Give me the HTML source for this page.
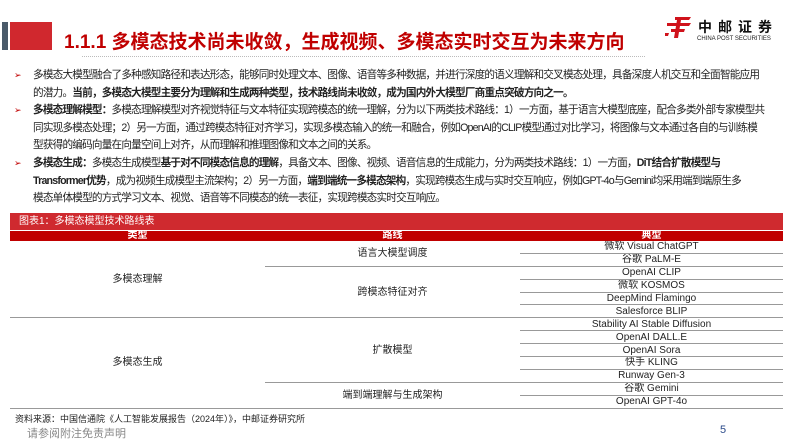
<!DOCTYPE html><html><head><meta charset="utf-8"><style>
body{margin:0;width:793px;height:446px;background:#fff;position:relative;overflow:hidden;font-family:"Liberation Sans","Noto Sans CJK SC",sans-serif;}
.a{position:absolute;white-space:nowrap}
.p{position:absolute;left:33px;font-size:10.6px;letter-spacing:-0.78px;line-height:17.6px;color:#222;white-space:nowrap}
.b{position:absolute;left:14px;font-size:9px;color:#c00000}
table{position:absolute;left:10px;top:231px;width:773px;border-collapse:collapse;font-size:10px;color:#222;table-layout:fixed}
td{text-align:center;height:11.9px;padding:0;line-height:11px;overflow:hidden}
.h td{background:#c00000;color:#fff;font-weight:bold;height:10px;line-height:10px}
.r{border-bottom:1px solid #999}
</style></head><body>
<div class="a" style="left:2px;top:22px;width:6px;height:28px;background:#4a5a6a"></div>
<div class="a" style="left:10px;top:22px;width:42px;height:28px;background:#d0282e"></div>
<div class="a" style="left:64px;top:27px;font-size:19px;font-weight:bold;color:#c00000">1.1.1 多模态技术尚未收敛，生成视频、多模态实时交互为未来方向</div>
<div class="a" style="left:82px;top:56px;width:563px;border-top:1px dotted #bbb"></div>
<svg class="a" style="left:665px;top:17px" width="28" height="21" viewBox="0 0 28 21"><g fill="#d0121b"><path d="M10 0h16l-2 3H10z"/><path d="M2 6h24l-2 3H2z"/><path d="M12 3h4l-3 18h-4z"/><path d="M6 12h14l-1 3H6z"/><path d="M0 16h4l-1 3H0z"/></g></svg>
<div class="a" style="left:698px;top:17px;font-size:14px;font-weight:bold;letter-spacing:6px;color:#111">中邮证券</div>
<div class="a" style="left:697px;top:36px;font-size:6px;color:#222">CHINA POST SECURITIES</div>

<div class="b" style="top:70px">➢</div>
<div class="p" style="top:67px">多模态大模型融合了多种感知路径和表达形态，能够同时处理文本、图像、语音等多种数据，并进行深度的语义理解和交叉模态处理，具备深度人机交互和全面智能应用<br>的潜力。<b>当前，多模态大模型主要分为理解和生成两种类型，技术路线尚未收敛，成为国内外大模型厂商重点突破方向之一。</b></div>
<div class="b" style="top:105px">➢</div>
<div class="p" style="top:102px"><b>多模态理解模型：</b>多模态理解模型对齐视觉特征与文本特征实现跨模态的统一理解，分为以下两类技术路线：1）一方面，基于语言大模型底座，配合多类外部专家模型共<br>同实现多模态处理；2）另一方面，通过跨模态特征对齐学习，实现多模态输入的统一和融合，例如OpenAI的CLIP模型通过对比学习，将图像与文本通过各自的与训练模<br>型获得的编码向量在向量空间上对齐，从而理解和推理图像和文本之间的关系。</div>
<div class="b" style="top:158px">➢</div>
<div class="p" style="top:155px"><b>多模态生成：</b>多模态生成模型<b>基于对不同模态信息的理解</b>，具备文本、图像、视频、语音信息的生成能力，分为两类技术路线：1）一方面，<b>DiT结合扩散模型与</b><br><b>Transformer优势</b>，成为视频生成模型主流架构；2）另一方面，<b>端到端统一多模态架构</b>，实现跨模态生成与实时交互响应，例如GPT-4o与Gemini均采用端到端原生多<br>模态单体模型的方式学习文本、视觉、语音等不同模态的统一表征，实现跨模态实时交互响应。</div>

<div class="a" style="left:10px;top:213px;width:773px;height:17px;background:#cf2a2f;color:#fff;font-size:10px;line-height:17px;padding-left:9px;box-sizing:border-box">图表1：多模态模型技术路线表</div>
<table>
<tr class="h"><td style="width:255px">类型</td><td style="width:255px">路线</td><td>典型</td></tr>
<tr><td rowspan="6" style="border-bottom:1px solid #999">多模态理解</td><td rowspan="2" class="r">语言大模型调度</td><td class="r">微软 Visual ChatGPT</td></tr>
<tr><td class="r">谷歌 PaLM-E</td></tr>
<tr><td rowspan="4" class="r">跨模态特征对齐</td><td class="r">OpenAI CLIP</td></tr>
<tr><td class="r">微软 KOSMOS</td></tr>
<tr><td class="r">DeepMind Flamingo</td></tr>
<tr><td class="r">Salesforce BLIP</td></tr>
<tr><td rowspan="7" style="border-bottom:1px solid #999">多模态生成</td><td rowspan="5" class="r">扩散模型</td><td class="r">Stability AI Stable Diffusion</td></tr>
<tr><td class="r">OpenAI DALL.E</td></tr>
<tr><td class="r">OpenAI Sora</td></tr>
<tr><td class="r">快手 KLING</td></tr>
<tr><td class="r">Runway Gen-3</td></tr>
<tr><td rowspan="2" class="r">端到端理解与生成架构</td><td class="r">谷歌 Gemini</td></tr>
<tr><td class="r">OpenAI GPT-4o</td></tr>
</table>
<div class="a" style="left:15px;top:412px;font-size:9px;color:#222">资料来源：中国信通院《人工智能发展报告（2024年）》，中邮证券研究所</div>
<div class="a" style="left:27px;top:425px;font-size:11px;color:#888">请参阅附注免责声明</div>
<div class="a" style="left:720px;top:424px;font-size:11px;color:#2a4a8a">5</div>
</body></html>
